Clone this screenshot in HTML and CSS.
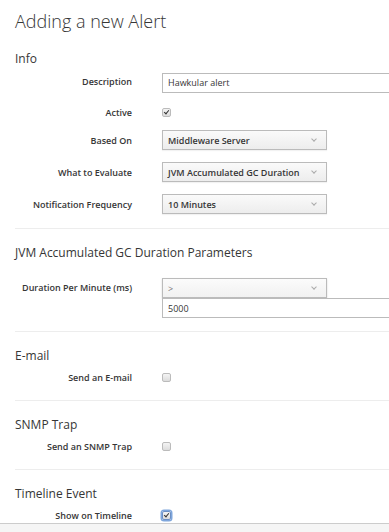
FILE: index.html
```html
<!DOCTYPE html>
<html lang="en">
<head>
    <meta charset="UTF-8" />
    <meta name="viewport" content="width=device-width, initial-scale=1">
    <title>Adding a new Alert</title>
    <link rel="stylesheet" href="styles.css">
</head>
<body>
<div class="page">
    <h1>Adding a new Alert</h1>

    <div class="section first">
        <h3>Info</h3>
        <div class="row">
            <label>Description</label>
            <div class="ctl"><input type="text" class="text wide" value="Hawkular alert" /></div>
        </div>
        <div class="row row-check">
            <label>Active</label>
            <div class="ctl"><span class="check on"></span></div>
        </div>
        <div class="row">
            <label>Based On</label>
            <div class="ctl"><div class="select"><span>Middleware Server</span><i class="caret"></i></div></div>
        </div>
        <div class="row">
            <label>What to Evaluate</label>
            <div class="ctl"><div class="select"><span>JVM Accumulated GC Duration</span><i class="caret"></i></div></div>
        </div>
        <div class="row">
            <label>Notification Frequency</label>
            <div class="ctl"><div class="select"><span>10 Minutes</span><i class="caret"></i></div></div>
        </div>
    </div>

    <div class="section params">
        <h3>JVM Accumulated GC Duration Parameters</h3>
        <div class="row row-double">
            <label>Duration Per Minute (ms)</label>
            <div class="ctl stack">
                <div class="select light"><span>&gt;</span><i class="caret"></i></div>
                <input type="text" class="text wide" value="5000" />
            </div>
        </div>
    </div>

    <div class="section toggle">
        <h3>E-mail</h3>
        <div class="row row-check">
            <label>Send an E-mail</label>
            <div class="ctl"><span class="check"></span></div>
        </div>
    </div>

    <div class="section toggle">
        <h3>SNMP Trap</h3>
        <div class="row row-check">
            <label>Send an SNMP Trap</label>
            <div class="ctl"><span class="check"></span></div>
        </div>
    </div>

    <div class="section toggle last">
        <h3>Timeline Event</h3>
        <div class="row row-check">
            <label>Show on Timeline</label>
            <div class="ctl"><span class="check on focus"></span></div>
        </div>
    </div>
</div>
<div class="footer"></div>
</body>
</html>
```

FILE: styles.css
```css
html, body {
    margin: 0;
    overflow: hidden;
    background: #fff;
}
body {
    font-family: "Open Sans", "Liberation Sans", sans-serif;
    color: #363636;
    height: 532px;
    display: flex;
    flex-direction: column;
}
.page {
    width: 440px;
    padding-left: 15px;
}
h1 {
    font-size: 18px;
    font-weight: 300;
    margin: 9px 0 0;
    line-height: 24px;
}
.section {
    border-bottom: 1px solid #ededed;
    padding-bottom: 14px;
}
.section.params { padding-bottom: 13px; }
.section.toggle { padding-bottom: 13px; }
.section.last { border-bottom: none; padding-bottom: 0; }
h3 {
    font-size: 12px;
    font-weight: 400;
    margin: 15px 0 3px;
    line-height: 18px;
}
.section.first h3 { margin-top: 17px; }
.section.toggle h3 { margin-bottom: 2px; }

.row {
    display: flex;
    align-items: center;
    height: 20px;
    margin-bottom: 12px;
}
.row:first-of-type { margin-bottom: 11px; }
.row:last-child { margin-bottom: 0; }
.row label {
    width: 117px;
    text-align: right;
    font-size: 9px;
    font-weight: 600;
    padding-right: 30px;
    white-space: nowrap;
}
.row-check { margin-bottom: 8px; }
.row-double {
    height: 40px;
    align-items: flex-start;
    margin-top: 16px;
}
.row-double label { line-height: 20px; }
.ctl { flex: 1; }
.stack { display: flex; flex-direction: column; }

.text {
    box-sizing: border-box;
    height: 20px;
    border: 1px solid #bbb;
    padding: 0 5px;
    font-family: inherit;
    font-size: 9px;
    color: #363636;
    outline: none;
}
.text.wide { width: 260px; }

.select {
    box-sizing: border-box;
    width: 165px;
    height: 20px;
    border: 1px solid #bbb;
    background: linear-gradient(#fafafa, #ededed);
    display: flex;
    align-items: center;
    justify-content: space-between;
    padding: 0 10px 0 5px;
    font-size: 9px;
    font-weight: 600;
    box-shadow: 0 1px 1px rgba(3, 3, 3, .05);
}
.select.light {
    background: linear-gradient(#fbfbfb, #f1f1f1);
    font-weight: 400;
    color: #777;
    box-shadow: 0 1px 2px rgba(0, 0, 0, .15);
}
.caret {
    width: 3px;
    height: 3px;
    border-right: 1px solid #aaa;
    border-bottom: 1px solid #aaa;
    transform: rotate(45deg);
    margin-top: -2px;
}

.check {
    display: block;
    box-sizing: border-box;
    width: 9px;
    height: 9px;
    border: 1px solid #bbb;
    border-radius: 2px;
    background: linear-gradient(#f4f4f4, #dcdcdc);
    position: relative;
}
.check.on::after {
    content: '';
    position: absolute;
    left: 2px;
    top: 0;
    width: 2px;
    height: 4px;
    border-right: 1.5px solid #333;
    border-bottom: 1.5px solid #333;
    transform: rotate(40deg);
}
.check.focus {
    box-shadow: 0 0 0 1.5px #7ea6dc;
    border-color: #6c8fc4;
}

.footer {
    flex: 1;
    border-top: 1px solid #ccc;
    background: #f5f5f5;
    margin-top: -2px;
}
```
